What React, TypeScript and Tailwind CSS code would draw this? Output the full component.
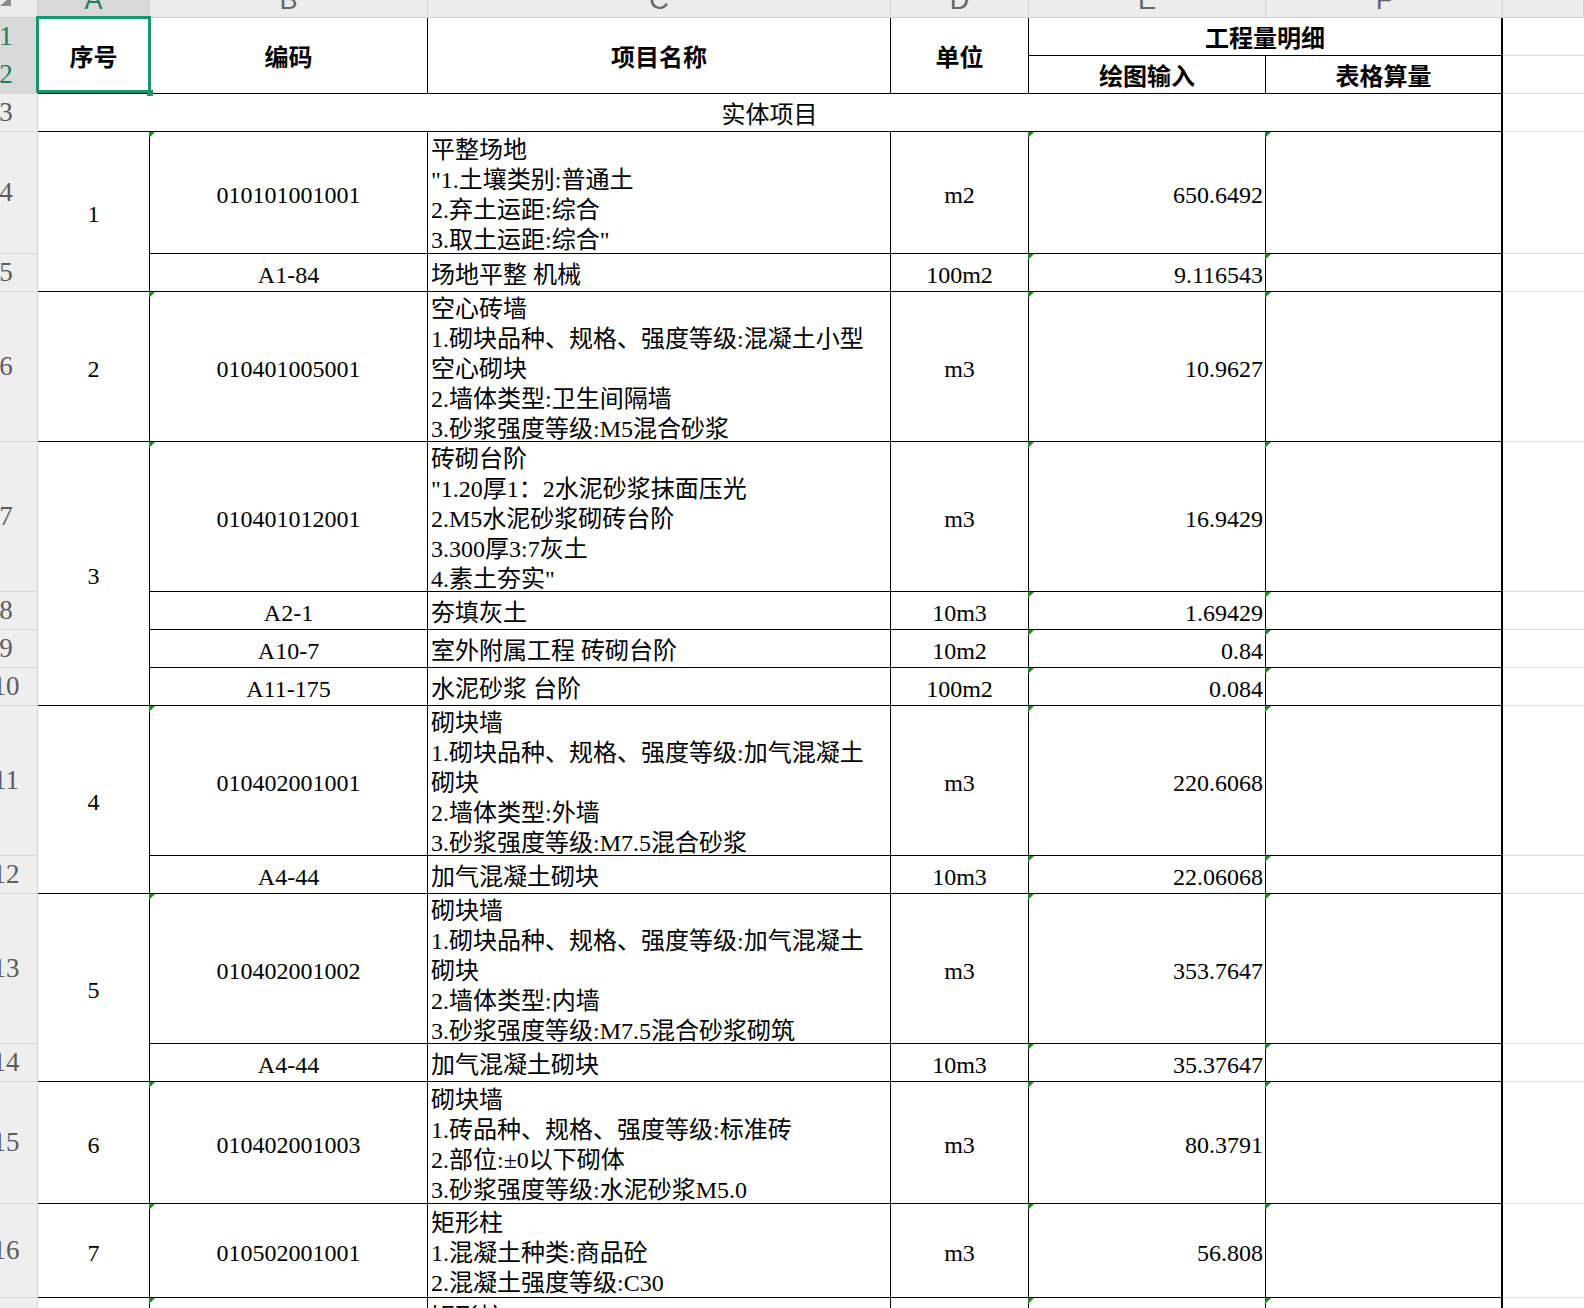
import React from "react";

type Line = {
  row: string;
  code: string;
  codeMark?: boolean;
  name: string[];
  unit: string;
  qty: string;
};

// sheet row n sits in grid row n + 1 (grid row 1 is the column header strip)
const LINES: Line[] = [
  { row: "row-start-5", code: "010101001001", codeMark: true, name: ["平整场地", "\"1.土壤类别:普通土", "2.弃土运距:综合", "3.取土运距:综合\""], unit: "m2", qty: "650.6492" },
  { row: "row-start-6", code: "A1-84", name: ["场地平整 机械"], unit: "100m2", qty: "9.116543" },
  { row: "row-start-7", code: "010401005001", codeMark: true, name: ["空心砖墙", "1.砌块品种、规格、强度等级:混凝土小型", "空心砌块", "2.墙体类型:卫生间隔墙", "3.砂浆强度等级:M5混合砂浆"], unit: "m3", qty: "10.9627" },
  { row: "row-start-8", code: "010401012001", codeMark: true, name: ["砖砌台阶", "\"1.20厚1：2水泥砂浆抹面压光", "2.M5水泥砂浆砌砖台阶", "3.300厚3:7灰土", "4.素土夯实\""], unit: "m3", qty: "16.9429" },
  { row: "row-start-9", code: "A2-1", name: ["夯填灰土"], unit: "10m3", qty: "1.69429" },
  { row: "row-start-10", code: "A10-7", name: ["室外附属工程 砖砌台阶"], unit: "10m2", qty: "0.84" },
  { row: "row-start-11", code: "A11-175", name: ["水泥砂浆 台阶"], unit: "100m2", qty: "0.084" },
  { row: "row-start-12", code: "010402001001", codeMark: true, name: ["砌块墙", "1.砌块品种、规格、强度等级:加气混凝土", "砌块", "2.墙体类型:外墙", "3.砂浆强度等级:M7.5混合砂浆"], unit: "m3", qty: "220.6068" },
  { row: "row-start-13", code: "A4-44", name: ["加气混凝土砌块"], unit: "10m3", qty: "22.06068" },
  { row: "row-start-14", code: "010402001002", codeMark: true, name: ["砌块墙", "1.砌块品种、规格、强度等级:加气混凝土", "砌块", "2.墙体类型:内墙", "3.砂浆强度等级:M7.5混合砂浆砌筑"], unit: "m3", qty: "353.7647" },
  { row: "row-start-15", code: "A4-44", name: ["加气混凝土砌块"], unit: "10m3", qty: "35.37647" },
  { row: "row-start-16", code: "010402001003", codeMark: true, name: ["砌块墙", "1.砖品种、规格、强度等级:标准砖", "2.部位:±0以下砌体", "3.砂浆强度等级:水泥砂浆M5.0"], unit: "m3", qty: "80.3791" },
  { row: "row-start-17", code: "010502001001", codeMark: true, name: ["矩形柱", "1.混凝土种类:商品砼", "2.混凝土强度等级:C30"], unit: "m3", qty: "56.808" },
  { row: "row-start-18", code: "010502001002", codeMark: true, name: ["矩形柱", "1.混凝土种类:商品砼", "2.混凝土强度等级:C30"], unit: "m3", qty: "42.336" },
];

const SEQ = [
  { cls: "row-start-5 row-span-2", n: "1" },
  { cls: "row-start-7", n: "2" },
  { cls: "row-start-8 row-span-4", n: "3" },
  { cls: "row-start-12 row-span-2", n: "4" },
  { cls: "row-start-14 row-span-2", n: "5" },
  { cls: "row-start-16", n: "6" },
  { cls: "row-start-17", n: "7" },
  { cls: "row-start-18", n: "8" },
];

const ROW_HEADS = [
  { cls: "row-start-2", n: "1", sel: true },
  { cls: "row-start-3", n: "2", sel: true },
  { cls: "row-start-4", n: "3" },
  { cls: "row-start-5", n: "4" },
  { cls: "row-start-6", n: "5" },
  { cls: "row-start-7", n: "6" },
  { cls: "row-start-8", n: "7" },
  { cls: "row-start-9", n: "8" },
  { cls: "row-start-10", n: "9" },
  { cls: "row-start-11", n: "10" },
  { cls: "row-start-12", n: "11" },
  { cls: "row-start-13", n: "12" },
  { cls: "row-start-14", n: "13" },
  { cls: "row-start-15", n: "14" },
  { cls: "row-start-16", n: "15" },
  { cls: "row-start-17", n: "16" },
  { cls: "row-start-18", n: "17" },
];

const COL_HEADS = [
  { cls: "col-start-2 bg-[#d8d8d8] text-[#1b7f58]", l: "A" },
  { cls: "col-start-3 bg-[#ececec] text-[#666666]", l: "B" },
  { cls: "col-start-4 bg-[#ececec] text-[#666666]", l: "C" },
  { cls: "col-start-5 bg-[#ececec] text-[#666666]", l: "D" },
  { cls: "col-start-6 bg-[#ececec] text-[#666666]", l: "E" },
  { cls: "col-start-7 bg-[#ececec] text-[#666666]", l: "F" },
  { cls: "col-start-8 bg-[#ececec] text-[#666666]", l: "" },
];

function Mark() {
  return (
    <span className="absolute left-[-1px] top-0 h-0 w-0 border-t-[6px] border-r-[6px] border-t-[#1f8a26] border-r-transparent" />
  );
}

function RowHead({ cls, n, sel }: { cls: string; n: string; sel?: boolean }) {
  return (
    <div
      className={`${cls} col-start-1 flex items-center overflow-hidden border-r border-b border-[#d6d6d6] ${
        sel ? "bg-[#d9d9d9] text-[#1b7f58]" : "bg-[#eeeeee] text-[#5c5c5c]"
      }`}
    >
      <div className="flex w-[12px] shrink-0 justify-center whitespace-nowrap text-[27px]">
        {n}
      </div>
    </div>
  );
}

export default function App() {
  return (
    <div className="relative h-[1308px] w-[1584px] overflow-hidden bg-white font-['Liberation_Serif','Noto_Sans_CJK_SC',serif] text-[24px] text-black">
      <div className="relative grid grid-cols-[38px_112px_278px_463px_138px_237px_237px_81px] grid-rows-[18px_38px_38px_38px_122px_38px_150px_150px_38px_38px_38px_150px_38px_150px_38px_122px_94px_94px]">
        {/* corner + column letters */}
        <div className="col-start-1 row-start-1 relative overflow-hidden border-r border-b border-[#d2d2d2] bg-[#ececec]">
          <svg className="absolute left-0 top-0" width="12" height="7" viewBox="0 0 12 7">
            <polygon points="0,6 11,6 11,-4" fill="#8a8a8a" />
          </svg>
        </div>
        {COL_HEADS.map((c) => (
          <div
            key={c.l || "g"}
            className={`${c.cls} row-start-1 flex items-start justify-center overflow-hidden border-r border-b border-[#d2d2d2] font-['Liberation_Sans',Arial,sans-serif] text-[27px]`}
          >
            <span className="mt-[-14px] leading-[28px]">{c.l}</span>
          </div>
        ))}

        {/* row numbers */}
        {ROW_HEADS.map((r) => (
          <RowHead key={r.n} cls={r.cls} n={r.n} sel={r.sel} />
        ))}

        {/* header rows 1-2 */}
        <div className="col-start-2 row-start-2 row-span-2 flex items-center justify-center border-r border-b border-black pt-[4px] font-bold">
          序号
        </div>
        <div className="col-start-3 row-start-2 row-span-2 flex items-center justify-center border-r border-b border-black pt-[4px] font-bold">
          编码
        </div>
        <div className="col-start-4 row-start-2 row-span-2 flex items-center justify-center border-r border-b border-black pt-[4px] font-bold">
          项目名称
        </div>
        <div className="col-start-5 row-start-2 row-span-2 flex items-center justify-center border-r border-b border-black pt-[4px] font-bold">
          单位
        </div>
        <div className="col-start-6 col-span-2 row-start-2 flex items-center justify-center border-r-2 border-b border-black pt-[4px] font-bold">
          工程量明细
        </div>
        <div className="col-start-6 row-start-3 flex items-center justify-center border-r border-b border-black pt-[4px] font-bold">
          绘图输入
        </div>
        <div className="col-start-7 row-start-3 flex items-center justify-center border-r-2 border-b border-black pt-[4px] font-bold">
          表格算量
        </div>

        {/* row 3 */}
        <div className="col-start-2 col-span-6 row-start-4 flex items-center justify-center border-r-2 border-b border-black pt-[4px]">
          实体项目
        </div>

        {/* 序号 column */}
        {SEQ.map((s) => (
          <div
            key={s.n}
            className={`${s.cls} col-start-2 flex items-center justify-center border-r border-b border-black pt-[4px]`}
          >
            {s.n}
          </div>
        ))}

        {/* data lines */}
        {LINES.map((l, i) => (
          <React.Fragment key={i}>
            <div className={`${l.row} col-start-3 relative flex items-center justify-center border-r border-b border-black pt-[4px]`}>
              {l.codeMark ? <Mark /> : null}
              {l.code}
            </div>
            <div className={`${l.row} col-start-4 flex flex-col justify-center border-r border-b border-black pt-[4px] pl-[3px]`}>
              {l.name.map((t, j) => (
                <div key={j} className="whitespace-pre leading-[30px]">
                  {t}
                </div>
              ))}
            </div>
            <div className={`${l.row} col-start-5 flex items-center justify-center border-r border-b border-black pt-[4px]`}>
              {l.unit}
            </div>
            <div className={`${l.row} col-start-6 relative flex items-center justify-end border-r border-b border-black pt-[4px] pr-[2px]`}>
              <Mark />
              {l.qty}
            </div>
            <div className={`${l.row} col-start-7 relative border-r-2 border-b border-black`}>
              <Mark />
            </div>
          </React.Fragment>
        ))}

        {/* column G gridlines */}
        {ROW_HEADS.map((r) => (
          <div key={`g-${r.n}`} className={`${r.cls} col-start-8 border-b border-[#e1e1e1]`} />
        ))}

        {/* active cell A1:A2 */}
        <div className="absolute left-[36px] top-[16px] h-[77px] w-[115px] border-[3px] border-[#18966a]" />
        <div className="absolute left-[147px] top-[90px] h-[6px] w-[6px] bg-[#18966a]" />
      </div>
    </div>
  );
}
